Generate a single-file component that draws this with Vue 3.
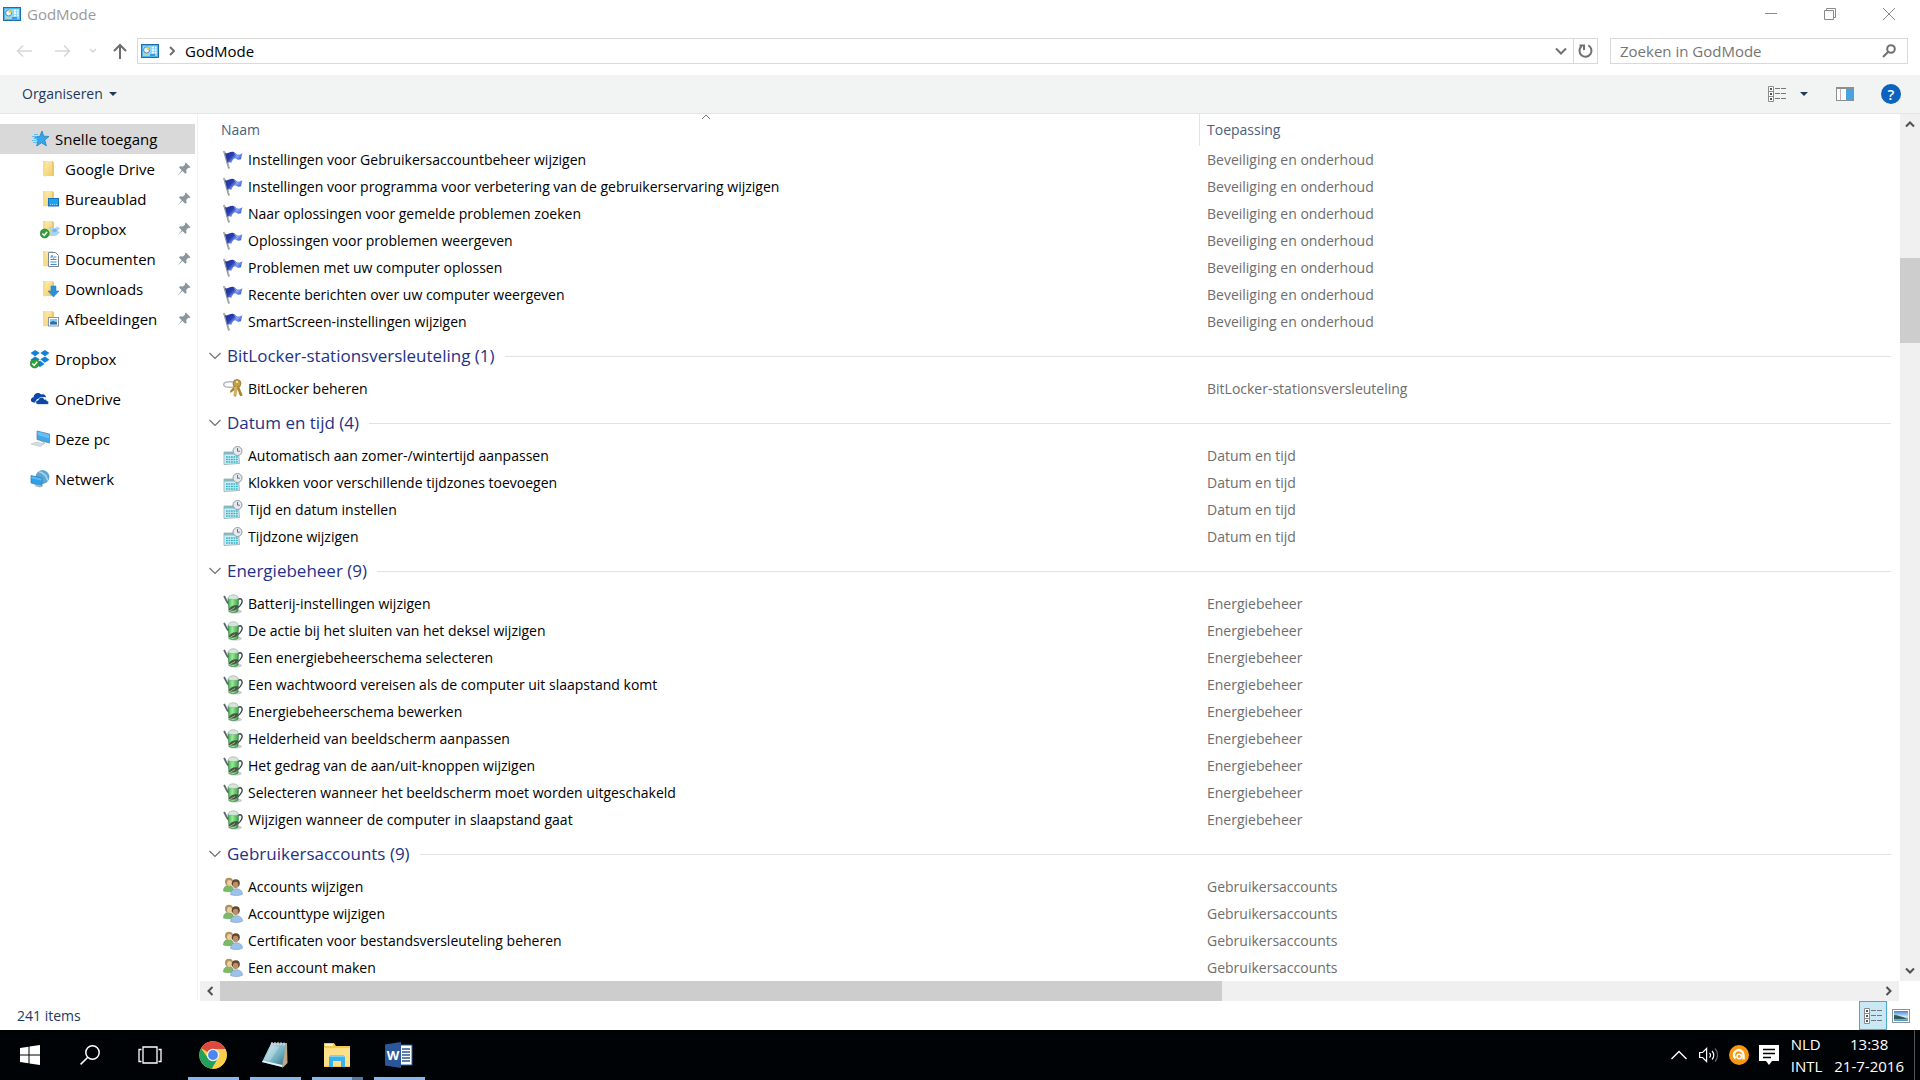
<template>
  <div class="desktop">
    <svg class="sprite" width="0" height="0" aria-hidden="true">
      <defs>
        <linearGradient id="g-folder" x1="0" y1="0" x2="1" y2="1">
          <stop offset="0" stop-color="#fff0b8" />
          <stop offset="1" stop-color="#efc95f" />
        </linearGradient>
        <linearGradient id="g-flag" x1="0" y1="0" x2="1" y2="0.6">
          <stop offset="0" stop-color="#1b2f9c" />
          <stop offset="0.45" stop-color="#2a3fae" />
          <stop offset="0.7" stop-color="#7f9df2" />
          <stop offset="1" stop-color="#2f55d0" />
        </linearGradient>
        <linearGradient id="g-cup" x1="0" y1="0" x2="1" y2="0">
          <stop offset="0" stop-color="#3cae4a" />
          <stop offset="0.4" stop-color="#97ee94" />
          <stop offset="1" stop-color="#3a9c48" />
        </linearGradient>
        <linearGradient id="g-note" x1="0" y1="0" x2="1" y2="1">
          <stop offset="0" stop-color="#d6eef4" />
          <stop offset="0.6" stop-color="#6fb0c2" />
          <stop offset="1" stop-color="#2f6577" />
        </linearGradient>
        <linearGradient id="g-sky" x1="0" y1="0" x2="0" y2="1">
          <stop offset="0" stop-color="#3f86d8" />
          <stop offset="0.55" stop-color="#cfe6f6" />
          <stop offset="1" stop-color="#4a90c0" />
        </linearGradient>
      </defs>

      <symbol id="i-panel" viewBox="0 0 18 14">
        <rect x="0.5" y="0.5" width="17" height="13" fill="#8fd6fb" stroke="#1b6fae" />
        <rect x="1.5" y="1.5" width="15" height="11" fill="none" stroke="#4cb4ee" />
        <circle cx="5.6" cy="6" r="3" fill="#e9f8ff" stroke="#2b78ae" stroke-width="0.8" />
        <path d="M5.6 6V3a3 3 0 0 1 3 3z" fill="#f2d04a" />
        <path d="M11 3.5h2M14 3.5h1.5M11 6h2M14 6h1.5M11 8.5h2M14 8.5h1.5" stroke="#fff" stroke-width="1.4" />
        <path d="M3.5 11h3" stroke="#f2d04a" stroke-width="1.2" />
        <path d="M9 11h5" stroke="#1d7fc0" stroke-width="1.4" />
      </symbol>

      <symbol id="i-star" viewBox="0 0 20 20">
        <path d="M12 2l1.700 5.200 5.300.3-4.300 3.500 1.700 5.800-4.900-3-4.800 3.200 1.300-5.600L4.500 7.700l5.200-.2z" fill="#35a5ea" stroke="#1d83cc" stroke-width="0.800" />
        <path d="M2 7.500h5M3.500 9.500h4M2 11.500h5M3 13.500h4M4 5.500h4" stroke="#5bbaf2" stroke-width="0.900" />
      </symbol>

      <symbol id="i-folder" viewBox="0 0 20 20">
        <path d="M3 2h9l2 1.500V17H3z" fill="url(#g-folder)" />
        <path d="M3 2h2.500v16L3 16.500z" fill="#f6dc8c" />
        <path d="M12 2l2 1.500v13.500h-2z" fill="#ecca6b" />
      </symbol>

      <symbol id="i-desktop" viewBox="0 0 20 20">
        <use href="#i-folder" width="20" height="20" />
        <rect x="8.500" y="9.500" width="10" height="7.500" fill="#1ea0f5" stroke="#1272b8" />
        <path d="M10 15.500h7" stroke="#bfe4ff" stroke-width="0.800" stroke-dasharray="1 1" />
      </symbol>

      <symbol id="i-check" viewBox="0 0 20 20">
        <circle cx="4.700" cy="14.500" r="4.500" fill="#2f9e3b" stroke="#1e7a2c" stroke-width="0.600" />
        <path d="M2.400 14.500l1.800 1.900 3-3.600" fill="none" stroke="#fff" stroke-width="1.400" />
      </symbol>

      <symbol id="i-dropfolder" viewBox="0 0 20 20">
        <use href="#i-folder" width="20" height="20" />
        <path d="M8.500 9.500l3-2 3 2 3-2 2.500 2-2.500 2 2.500 2-3 2.500-2.500 1-3-1-3-2.500 3-2z" fill="#a9d3f2" />
        <path d="M11.500 11.500l3-2 3 2-3 2z" fill="#7ab4e2" />
        <use href="#i-check" width="20" height="20" />
      </symbol>

      <symbol id="i-documents" viewBox="0 0 20 20">
        <use href="#i-folder" width="20" height="20" />
        <path d="M8.500 3.500h7l3 3v11h-10z" fill="#fff" stroke="#7b8790" />
        <path d="M10.500 8h2M14 8h2.500M10.500 10.500h6M10.500 13h6M10.500 15.500h6" stroke="#3b8fd0" />
        <path d="M12 6l-1 2.500M12.500 6l1 4" stroke="#3b8fd0" stroke-width="0.800" />
      </symbol>

      <symbol id="i-downloads" viewBox="0 0 20 20">
        <use href="#i-folder" width="20" height="20" />
        <path d="M11 7h5v5h3l-5.500 6L8 12h3z" fill="#2b90dc" stroke="#1c74b8" stroke-width="0.500" />
      </symbol>

      <symbol id="i-pictures" viewBox="0 0 20 20">
        <use href="#i-folder" width="20" height="20" />
        <rect x="8.500" y="8.500" width="10" height="8.500" fill="#fff" stroke="#8a949b" />
        <rect x="10" y="10" width="7" height="5.500" fill="#8cc6ee" />
        <path d="M10 13.500l3-1.500 4 1.500v2h-7z" fill="#2b6ea8" />
      </symbol>

      <symbol id="i-dropbox" viewBox="0 0 20 20">
        <path d="M5.200 1L.5 4l4.500 3.300L9.700 4zM14.800 1l-4.500 3L15 7.300 19.500 4zM.5 10.700l4.700 3 4.500-3.400L5 7.500zM15 7.500l-4.700 2.800 4.500 3.400 4.700-3zM10 11.500l-4.500 3.600L10 18l4.500-2.900z" fill="#1081de" />
        <use href="#i-check" width="20" height="20" />
      </symbol>

      <symbol id="i-onedrive" viewBox="0 0 20 20">
        <path d="M4 13.500C0 13.500 0 8.500 3.600 8.200 3.600 4.500 8.500 2.500 11 5.600 14 4.500 16 6.500 16 8.500c-3-1-5 0-6 1.500-2.500-.8-4.500.8-4.500 3.500z" fill="#0d47a8" />
        <path d="M8 15.500c-3 0-3-4.300.2-4.500.6-3.200 5.500-3.600 6.300-.6 1-.5 2.300.1 2.300 1.300 2.800.2 2.400 3.800 0 3.800z" fill="#0d47a8" stroke="#fff" stroke-width="0.700" />
      </symbol>

      <symbol id="i-pc" viewBox="0 0 20 20">
        <path d="M7 2l12.500 3v9L7 10.500z" fill="#3fa9ea" stroke="#5d7688" stroke-width="0.700" />
        <path d="M7.500 2.600l11.500 2.800v4L7.500 6z" fill="#66c0f5" />
        <path d="M1 15l6-2 7 2-4 2.500z" fill="#d8dfe4" stroke="#a9b4bc" stroke-width="0.500" />
        <path d="M11 12l3 1v2" stroke="#9aa6ae" fill="none" />
      </symbol>

      <symbol id="i-network" viewBox="0 0 20 20">
        <circle cx="12.500" cy="8" r="6.500" fill="#5ba8d4" stroke="#3f86b4" stroke-width="0.600" />
        <path d="M9 3c3-.5 4 2 6 3s1 4 3 5" stroke="#a9d6e8" stroke-width="1.500" fill="none" />
        <path d="M1 6.500L12 9v8L1 14z" fill="#2f9fe8" stroke="#2a7db8" stroke-width="0.700" />
        <path d="M1.500 7.200L11.500 9.500v2L1.500 9.500z" fill="#5cb8f2" />
        <path d="M4 17l4-1.500 5 1.800-3 1.200z" fill="#a7b4bc" />
      </symbol>

      <symbol id="i-pin" viewBox="0 0 14 14">
        <path d="M8.800.5L13.500 5.200l-1.200.8-1-.2-2.100 2.200.4 2.800-1.300 1L5.500 9 .8 13.200 4.800 8.300 2 5.500l1-1.300 2.800.4L8 2.700l-.2-1z" fill="#8b959c" />
      </symbol>

      <symbol id="i-flag" viewBox="0 0 20 20">
        <path d="M1 1l5 17.500" stroke="#85888f" stroke-width="1.800" />
        <path d="M1.300 1l5 17.500" stroke="#d4d6dc" stroke-width="0.600" />
        <path d="M2 3c3 1.500 5-2 8.500-1 2.500.8 2.500 2.500 4 2.500 2 .2 3.500-.5 5-1.200-.8 2-1 4-1.500 6-2 .6-3.500.5-5-.5-2.200-1-3.500 1-4.700 4.200-1.500-.8-2.800-1-4 0z" fill="url(#g-flag)" />
        <path d="M11 2.500c2 1 1.500 3.500 4 4" stroke="#9db6fa" fill="none" />
      </symbol>

      <symbol id="i-keys" viewBox="0 0 20 20">
        <ellipse cx="7" cy="5.500" rx="6.300" ry="2.800" fill="none" stroke="#b4b8c2" stroke-width="1.500" />
        <circle cx="14" cy="4.500" r="4" fill="#c2a045" stroke="#8d6f22" stroke-width="0.700" />
        <circle cx="14" cy="3" r="1" fill="#fff6cf" />
        <path d="M13 8l3-.5 3.700 9-2.300.8-1.300-2-.6-2.500z" fill="#a8842e" />
        <path d="M12 7l2.500 1-1.500 9.500-2.300-.5.300-2z" fill="#d3b864" stroke="#a18436" stroke-width="0.400" />
        <path d="M11 7.500l-4 4.500.5 2 4-3z" fill="#a8842e" />
      </symbol>

      <symbol id="i-date" viewBox="0 0 20 20">
        <path d="M1 6h14.500l1 11.500L1 18.500z" fill="#cdeff5" stroke="#8fa8ae" stroke-width="0.800" />
        <path d="M1 6h14.500v2.500H1z" fill="#86b8c2" />
        <path d="M3 11h12M3 13.500h12M3 16h12" stroke="#35b3c9" stroke-width="1.600" stroke-dasharray="1.800 0.700" />
        <circle cx="14.500" cy="5" r="4.500" fill="#e6eaed" stroke="#8e9aa2" />
        <path d="M14.500 2v3.200h2.300" stroke="#56626a" fill="none" stroke-width="0.900" />
      </symbol>

      <symbol id="i-power" viewBox="0 0 20 20">
        <ellipse cx="12" cy="17.500" rx="7" ry="2" fill="#c9cdd0" />
        <path d="M5.500 9.500C3.500 8 3 5 1 2" fill="none" stroke="#5b6670" stroke-width="1.800" />
        <path d="M15 5.500c3.500-2 5 1 3.500 4s-2.500 3.500-3.500 4" fill="none" stroke="#3c464e" stroke-width="1.400" />
        <path d="M5 4.500h10.500L15 17c-2 2-7 2-9 0z" fill="url(#g-cup)" stroke="#2b6d38" stroke-width="0.600" />
        <path d="M5 4.500c.5-5 10-5 10.500 0-2.500 1.500-8 1.500-10.500 0z" fill="#d4e6d8" stroke="#8fa698" stroke-width="0.600" />
        <path d="M5.500 16c1.500-4 5.500-5.500 9.800-4.500.2 4-4.800 6.500-9.800 4.500z" fill="#4b5546" />
        <path d="M5 17.500l7-4" stroke="#b9c5a8" stroke-width="0.800" />
      </symbol>

      <symbol id="i-users" viewBox="0 0 20 20">
        <path d="M.5 14c0-4 2.200-5.500 5-5.500s5 1.500 5 5c-2.500 1.500-7 1.700-10 .5z" fill="#7cba68" stroke="#5c9650" stroke-width="0.500" />
        <circle cx="6" cy="4.800" r="4" fill="#b3935c" />
        <ellipse cx="6.500" cy="6" rx="2.500" ry="3" fill="#eecaa5" />
        <path d="M7.500 17.500c0-4 3-5.800 6-5.800s6 1.800 6 5.500c-3 1.800-9 1.800-12 .3z" fill="#9bc2ea" stroke="#6a93c0" stroke-width="0.500" />
        <circle cx="12.800" cy="6.200" r="4" fill="#60482f" />
        <ellipse cx="12.600" cy="8" rx="2.700" ry="3.300" fill="#bd8f68" />
      </symbol>

      <symbol id="i-details" viewBox="0 0 18 16">
        <path d="M.5.5h5v15h-5zM.5 5.500h5M.5 10.500h5" fill="#fff" stroke="#8d8a8a" />
        <path d="M2 2h2v2H2zM2 7h2v2H2zM2 12h2v2H2z" fill="#555" />
        <path d="M7 2.500h5M13 2.500h5M7 7.500h5M13 7.500h5M7 12.500h5M13 12.500h5" stroke="#777" />
      </symbol>
    </svg>

    <div class="window">
      <header class="titlebar">
        <svg class="panel-icon"><use href="#i-panel" /></svg>
        <span class="title">GodMode</span>
        <button class="win-btn" aria-label="Minimaliseren">
          <svg width="12" height="12"><path d="M0 5.500h12" /></svg>
        </button>
        <button class="win-btn" aria-label="Verkleinen">
          <svg width="12" height="12"><path d="M.5 2.500h9v9h-9zM2.500 2.500v-2h9v9h-2" /></svg>
        </button>
        <button class="win-btn" aria-label="Sluiten">
          <svg width="12" height="12"><path d="M0 0l12 12M12 0L0 12" /></svg>
        </button>
      </header>

      <nav class="navbar">
        <button class="nav-btn off" aria-label="Vorige">
          <svg width="16" height="14"><path d="M16 7H1.500M7 1.500L1.500 7 7 12.500" /></svg>
        </button>
        <button class="nav-btn off" aria-label="Volgende">
          <svg width="16" height="14"><path d="M0 7h14.500M9 1.500L14.500 7 9 12.500" /></svg>
        </button>
        <button class="nav-btn small off" aria-label="Recente locaties">
          <svg width="8" height="6"><path d="M1 1l3 3 3-3" /></svg>
        </button>
        <button class="nav-btn up" aria-label="Omhoog">
          <svg width="14" height="16"><path d="M7 16V2M1 8l6-6 6 6" /></svg>
        </button>
        <div class="address">
          <svg class="panel-icon"><use href="#i-panel" /></svg>
          <svg class="crumb" width="6" height="10"><path d="M1 1l4 4-4 4" /></svg>
          <a class="path" href="#">GodMode</a>
          <button class="drop" aria-label="Vorige locaties">
            <svg width="12" height="8"><path d="M1 1.500l5 5 5-5" /></svg>
          </button>
          <button class="refresh" aria-label="Vernieuwen">
            <svg width="16" height="16"><path d="M3.500 3.200a6 6 0 1 0 6.800-.8M1.500 2.500h4.500v4.500" /></svg>
          </button>
        </div>
        <div class="search">
          <input type="text" placeholder="Zoeken in GodMode" aria-label="Zoeken in GodMode" />
          <svg width="14" height="14"><circle cx="9" cy="5" r="3.800" /><path d="M6.200 7.800L1 13" /></svg>
        </div>
      </nav>

      <div class="commandbar">
        <button class="organize">Organiseren <i class="caret"></i></button>
        <button class="cmd views" aria-label="Weergave wijzigen">
          <svg width="18" height="16"><use href="#i-details" /></svg>
          <i class="caret"></i>
        </button>
        <button class="cmd pane" aria-label="Voorbeeldvenster">
          <svg width="18" height="14">
            <rect x="0.500" y="0.500" width="17" height="13" fill="#fff" stroke="#8a8f96" />
            <path d="M0 1.500h18" stroke="#8a8f96" />
            <path d="M4.500 2v11" stroke="#c9b0b0" />
            <rect x="10" y="2" width="7" height="11" fill="#4aa3e0" />
          </svg>
        </button>
        <button class="help" aria-label="Help">?</button>
      </div>

      <div class="body">
        <aside class="sidebar">
          <template v-for="section in places" :key="section.label">
            <a href="#" class="place" :class="{ selected: section.selected }">
              <svg><use :href="'#i-' + section.icon" /></svg>
              <span>{{ section.label }}</span>
            </a>
            <a v-for="child in section.children" :key="child.label" href="#" class="place child">
              <svg><use :href="'#i-' + child.icon" /></svg>
              <span>{{ child.label }}</span>
              <svg class="pin"><use href="#i-pin" /></svg>
            </a>
            <div class="spacer"></div>
          </template>
        </aside>

        <main class="content">
          <div class="list-area">
            <div class="list">
              <svg class="sort" width="10" height="6"><path d="M1 5l4-4 4 4" /></svg>
              <table>
                <colgroup>
                  <col class="col-name" />
                  <col />
                </colgroup>
                <thead>
                  <tr>
                    <th scope="col">Naam</th>
                    <th scope="col">Toepassing</th>
                  </tr>
                </thead>
                <tbody v-for="group in groups" :key="group.name">
                  <tr v-if="group.count" class="group">
                    <th colspan="2" scope="rowgroup">
                      <div class="group-head">
                        <svg width="12" height="8"><path d="M.5 1l5.500 5.500L11.500 1" /></svg>
                        <span>{{ group.name }} ({{ group.count }})</span>
                      </div>
                    </th>
                  </tr>
                  <tr v-for="item in group.items" :key="item">
                    <td>
                      <div class="name">
                        <svg><use :href="'#i-' + group.icon" /></svg>
                        <span>{{ item }}</span>
                      </div>
                    </td>
                    <td class="app">{{ group.name }}</td>
                  </tr>
                </tbody>
              </table>
            </div>
            <div class="vscroll">
              <button aria-label="Omhoog schuiven">
                <svg width="10" height="8"><path d="M1 6.500l4-4 4 4" /></svg>
              </button>
              <div class="track">
                <div class="thumb" :style="{ top: vThumb.start + '%', height: vThumb.size + '%' }"></div>
              </div>
              <button aria-label="Omlaag schuiven">
                <svg width="10" height="8"><path d="M1 1.500l4 4 4-4" /></svg>
              </button>
            </div>
          </div>
          <div class="hscroll">
            <button aria-label="Naar links schuiven">
              <svg width="8" height="10"><path d="M6.500 1l-4 4 4 4" /></svg>
            </button>
            <div class="track">
              <div class="thumb" :style="{ width: hThumb + '%' }"></div>
            </div>
            <button aria-label="Naar rechts schuiven">
              <svg width="8" height="10"><path d="M1.500 1l4 4-4 4" /></svg>
            </button>
          </div>
        </main>
      </div>

      <footer class="statusbar">
        <span>241 items</span>
        <button class="mode active" aria-label="Details">
          <svg width="18" height="16"><use href="#i-details" /></svg>
        </button>
        <button class="mode" aria-label="Grote miniaturen">
          <svg width="18" height="14">
            <rect x="0.500" y="0.500" width="17" height="13" fill="#fff" stroke="#8a949b" />
            <rect x="2" y="2" width="14" height="10" fill="url(#g-sky)" />
            <path d="M2 6c4 0 8 2 14 4H2z" fill="#2f5a52" />
          </svg>
        </button>
      </footer>
    </div>

    <div class="taskbar">
      <button class="task" aria-label="Start">
        <svg width="20" height="20" fill="#fff">
          <path d="M0 3l8.500-1.200V9.500H0zM9.500 1.600L20 0v9.500H9.500zM0 10.500h8.500v7.800L0 17zM9.500 10.500H20V20L9.500 18.400z" />
        </svg>
      </button>
      <button class="task" aria-label="Zoeken">
        <svg width="20" height="20" fill="none" stroke="#fff" stroke-width="1.500">
          <circle cx="12.500" cy="7.500" r="6.700" /><path d="M7.800 12.200L.6 19.400" />
        </svg>
      </button>
      <button class="task" aria-label="Taakweergave">
        <svg width="24" height="20" fill="none" stroke="#fff" stroke-width="1.300">
          <path d="M5 2h14v16H5zM3.500 4.500H1v12h2.500M20.500 4.500H23v12h-2.500" />
        </svg>
      </button>

      <div class="apps">
        <button class="task app-btn" aria-label="Google Chrome">
          <svg width="28" height="28" viewBox="0 0 28 28">
            <circle cx="14" cy="14" r="13.700" fill="#fbd04b" />
            <path d="M14 14L2.100 7.200A13.700 13.700 0 0 1 25.900 7.200L26.300 8H14z" fill="#dc4a3d" />
            <path d="M2.100 7.200A13.700 13.700 0 0 0 13 27.700L19.200 17 14 14 8.800 17z" fill="#23a05a" />
            <path d="M13 27.700L19.300 17A6 6 0 0 0 19.200 10.800L18 8h8.400A13.700 13.700 0 0 1 13 27.700z" fill="#fbd04b" />
            <circle cx="14" cy="14" r="6.200" fill="#f4f4f4" />
            <circle cx="14" cy="14" r="4.900" fill="#4a86ee" />
          </svg>
        </button>
        <button class="task app-btn" aria-label="Kladblok">
          <svg width="28" height="28" viewBox="0 0 28 28">
            <path d="M10 2h16l.5 20-5 5z" fill="#bfa887" />
            <path d="M10 2.500l15 .5-4 23L1 21z" fill="url(#g-note)" />
            <path d="M1 21l20 5 .3-2L2 19.500z" fill="#e6f2f4" />
            <path d="M11 1v3M14 1v3M17 1v3M20 1.200v3M23 1.500v3" stroke="#dfe5e7" stroke-width="1.200" />
            <path d="M10.500 5l8 .5L9 20l-6-1z" fill="#fff" opacity="0.250" />
          </svg>
        </button>
        <button class="task app-btn grouped" aria-label="Verkenner">
          <svg width="28" height="28" viewBox="0 0 28 28">
            <path d="M1 2h10l2 3h14v21H1z" fill="#f3c84f" />
            <path d="M2 3h8v2H2z" fill="#fff3bf" />
            <path d="M1 7h26v18H1z" fill="#fde088" />
            <path d="M6 26V16l2-2h12l2 2v10h-4v-6h-8v6z" fill="#3ab3ec" />
            <path d="M6 16l2-2h12l2 2z" fill="#7fd0f5" />
          </svg>
        </button>
        <button class="task app-btn" aria-label="Word">
          <svg width="28" height="28" viewBox="0 0 28 28">
            <rect x="14" y="4" width="13" height="20" fill="#fff" stroke="#2b579a" />
            <path d="M17 8h8M17 11h8M17 14h8M17 17h8M17 20h8" stroke="#2b579a" stroke-width="1.500" />
            <path d="M0 3.500L16 1v26L0 24.500z" fill="#2b579a" />
            <text x="8" y="19" text-anchor="middle" class="word-letter">W</text>
          </svg>
        </button>
      </div>

      <div class="tray">
        <button aria-label="Verborgen pictogrammen">
          <svg width="16" height="10" fill="none" stroke="#fff" stroke-width="1.400"><path d="M.5 9L8 1.500 15.500 9" /></svg>
        </button>
        <button aria-label="Volume">
          <svg width="20" height="16" fill="none" stroke="#fff" stroke-width="1.200">
            <path d="M.6 5.500h3l4-4v13l-4-4h-3z" />
            <path d="M10.500 6a3 3 0 0 1 0 4.500M13 4a6 6 0 0 1 0 8.500" />
            <path d="M16 1.500a9.500 9.500 0 0 1 0 13" stroke="#666" />
          </svg>
        </button>
        <button aria-label="Avast">
          <svg width="20" height="20">
            <circle cx="10" cy="10" r="10" fill="#f7980f" />
            <path d="M6.500 13.500a4.800 4.800 0 1 1 8-3.500v4.500" fill="none" stroke="#fff" stroke-width="2.400" />
            <circle cx="10.200" cy="11.500" r="2.200" fill="none" stroke="#fff" stroke-width="1.600" />
          </svg>
        </button>
        <button aria-label="Actiecentrum">
          <svg width="20" height="20">
            <path d="M0 0h20v16h-7l-3 4-3-4H0z" fill="#fff" />
            <path d="M4 4.500h12M4 8.500h12M4 12.500h8" stroke="#000" stroke-width="1.300" />
          </svg>
        </button>
        <div class="lang"><span>NLD</span><span>INTL</span></div>
        <div class="clock"><time>13:38</time><time>21-7-2016</time></div>
        <div class="peek"></div>
      </div>
    </div>
  </div>
</template>

<script setup>
import { ref } from "vue";

const vThumb = ref({ start: 15, size: 10.3 });
const hThumb = ref(60.4);

const places = [
  {
    label: "Snelle toegang",
    icon: "star",
    selected: true,
    children: [
      { label: "Google Drive", icon: "folder" },
      { label: "Bureaublad", icon: "desktop" },
      { label: "Dropbox", icon: "dropfolder" },
      { label: "Documenten", icon: "documents" },
      { label: "Downloads", icon: "downloads" },
      { label: "Afbeeldingen", icon: "pictures" },
    ],
  },
  { label: "Dropbox", icon: "dropbox" },
  { label: "OneDrive", icon: "onedrive" },
  { label: "Deze pc", icon: "pc" },
  { label: "Netwerk", icon: "network" },
];

// the first group is scrolled past its heading, so it has no count
const groups = [
  {
    name: "Beveiliging en onderhoud",
    icon: "flag",
    items: [
      "Instellingen voor Gebruikersaccountbeheer wijzigen",
      "Instellingen voor programma voor verbetering van de gebruikerservaring wijzigen",
      "Naar oplossingen voor gemelde problemen zoeken",
      "Oplossingen voor problemen weergeven",
      "Problemen met uw computer oplossen",
      "Recente berichten over uw computer weergeven",
      "SmartScreen-instellingen wijzigen",
    ],
  },
  {
    name: "BitLocker-stationsversleuteling",
    count: 1,
    icon: "keys",
    items: ["BitLocker beheren"],
  },
  {
    name: "Datum en tijd",
    count: 4,
    icon: "date",
    items: [
      "Automatisch aan zomer-/wintertijd aanpassen",
      "Klokken voor verschillende tijdzones toevoegen",
      "Tijd en datum instellen",
      "Tijdzone wijzigen",
    ],
  },
  {
    name: "Energiebeheer",
    count: 9,
    icon: "power",
    items: [
      "Batterij-instellingen wijzigen",
      "De actie bij het sluiten van het deksel wijzigen",
      "Een energiebeheerschema selecteren",
      "Een wachtwoord vereisen als de computer uit slaapstand komt",
      "Energiebeheerschema bewerken",
      "Helderheid van beeldscherm aanpassen",
      "Het gedrag van de aan/uit-knoppen wijzigen",
      "Selecteren wanneer het beeldscherm moet worden uitgeschakeld",
      "Wijzigen wanneer de computer in slaapstand gaat",
    ],
  },
  {
    name: "Gebruikersaccounts",
    count: 9,
    icon: "users",
    items: [
      "Accounts wijzigen",
      "Accounttype wijzigen",
      "Certificaten voor bestandsversleuteling beheren",
      "Een account maken",
    ],
  },
];
</script>

<style>
body {
  margin: 0;
  overflow: hidden;
}
</style>

<style scoped>
.desktop {
  display: flex;
  flex-direction: column;
  height: 100vh;
  background: #fff;
  color: #000;
  font-family: "Open Sans", "Noto Sans", sans-serif;
  font-size: 15px;
  line-height: 20px;
}

.desktop * {
  box-sizing: border-box;
}

.sprite {
  position: absolute;
}

svg {
  display: block;
  flex: none;
}

button {
  display: flex;
  align-items: center;
  justify-content: center;
  padding: 0;
  border: 0;
  background: none;
  font: inherit;
  color: inherit;
}

a {
  color: inherit;
  text-decoration: none;
}

.window {
  display: flex;
  flex-direction: column;
  flex: 1;
  min-height: 0;
}

.panel-icon {
  width: 18px;
  height: 14px;
}

/* title bar */
.titlebar {
  display: flex;
  align-items: center;
  height: 28px;
  padding: 0 2px 0 3px;
}

.title {
  flex: 1;
  margin-left: 6px;
  color: #999;
}

.win-btn {
  width: 59px;
  height: 28px;
}

.win-btn path {
  fill: none;
  stroke: #8a8a8a;
}

/* navigation */
.navbar {
  display: flex;
  align-items: center;
  height: 47px;
  padding: 0 12px 2px 4px;
}

.nav-btn {
  width: 39px;
  height: 26px;
}

.nav-btn.small {
  width: 21px;
}

.nav-btn.up {
  width: 34px;
}

.nav-btn path {
  fill: none;
  stroke: #6d6d6d;
  stroke-width: 2;
}

.nav-btn.off path {
  stroke: #d6d6d6;
  stroke-width: 1.5;
}

.address {
  display: flex;
  align-items: center;
  flex: 1;
  height: 26px;
  padding-left: 3px;
  border: 1px solid #d9d9d9;
}

.crumb {
  margin: 0 10px;
}

.crumb path,
.drop path,
.refresh path,
.search circle,
.search path {
  fill: none;
  stroke: #707070;
  stroke-width: 2;
}

.path {
  flex: 1;
}

.drop,
.refresh {
  width: 24px;
  height: 24px;
}

.refresh {
  border-left: 1px solid #d9d9d9;
}

.search {
  display: flex;
  align-items: center;
  width: 298px;
  height: 26px;
  margin-left: 12px;
  padding: 0 11px 0 9px;
  border: 1px solid #d9d9d9;
}

.search input {
  flex: 1;
  min-width: 0;
  padding: 0;
  border: 0;
  outline: 0;
  font: inherit;
}

.search input::placeholder {
  color: #757575;
}

/* command bar */
.commandbar {
  display: flex;
  align-items: center;
  height: 39px;
  padding: 0 19px 0 22px;
  border-bottom: 1px solid #e4e6e6;
  background: #f2f4f4;
  color: #1e395b;
}

.organize {
  gap: 6px;
  margin-right: auto;
  font-size: 14px;
}

.caret {
  border: 4px solid transparent;
  border-top-color: #1e395b;
  border-bottom: 0;
}

.views {
  gap: 14px;
}

.pane {
  margin: 0 27px 0 28px;
}

.help {
  width: 20px;
  height: 20px;
  border-radius: 50%;
  background: #0a63bd;
  color: #fff;
  font-weight: 600;
}

/* body */
.body {
  display: flex;
  flex: 1;
  min-height: 0;
}

.sidebar {
  width: 198px;
  padding: 10px 2px 0 0;
  border-right: 1px solid #f2f2f2;
}

.place {
  display: flex;
  align-items: center;
  gap: 5px;
  height: 30px;
  padding: 0 4px 0 30px;
}

.place svg {
  width: 20px;
  height: 20px;
}

.place.child {
  padding-left: 40px;
}

.place.selected {
  background: #d9d9d9;
}

.place .pin {
  width: 14px;
  height: 14px;
  margin-left: auto;
}

.spacer {
  height: 10px;
}

.content {
  display: flex;
  flex-direction: column;
  flex: 1;
  min-width: 0;
  padding-left: 2px;
}

.list-area {
  display: flex;
  flex: 1;
  min-height: 0;
}

.list {
  position: relative;
  flex: 1;
  min-width: 0;
  overflow: hidden;
}

.sort {
  position: absolute;
  top: 0;
  left: 501px;
}

.sort path {
  fill: none;
  stroke: #777;
}

table {
  width: 100%;
  table-layout: fixed;
  border-collapse: collapse;
  font-size: 14px;
}

.col-name {
  width: 999px;
}

th,
td {
  height: 27px;
  padding: 0 0 0 8px;
  text-align: left;
  white-space: nowrap;
  font-weight: normal;
}

thead th {
  height: 32px;
  color: #4c607a;
}

thead th:first-child {
  padding-left: 21px;
}

thead th + th {
  background: linear-gradient(#e3e3e3, #e3e3e3) no-repeat 0 0 / 1px 32px;
}

td:first-child {
  padding-left: 23px;
}

.name {
  display: flex;
  align-items: center;
  gap: 5px;
}

.name svg {
  width: 20px;
  height: 20px;
}

.app {
  color: #6d6d6d;
}

.group th {
  height: 40px;
  padding: 2px 9px 0;
}

.group-head {
  display: flex;
  align-items: center;
  gap: 6px;
  color: #1e3287;
  font-size: 17px;
  line-height: 24px;
}

.group-head path {
  fill: none;
  stroke: #707070;
  stroke-width: 1.2;
}

.group-head::after {
  content: "";
  flex: 1;
  height: 1px;
  margin-left: 4px;
  background: #e2e2e2;
}

/* scroll bars */
.vscroll,
.hscroll {
  display: flex;
  background: #f0f0f0;
}

.vscroll {
  flex-direction: column;
  width: 20px;
}

.hscroll {
  height: 20px;
  margin-right: 21px;
}

.vscroll button,
.hscroll button {
  width: 20px;
  height: 20px;
}

.vscroll path,
.hscroll path {
  fill: none;
  stroke: #505050;
  stroke-width: 2;
}

.track {
  position: relative;
  flex: 1;
}

.thumb {
  background: #cdcdcd;
}

.vscroll .thumb {
  position: absolute;
  left: 0;
  right: 0;
}

.hscroll .thumb {
  height: 100%;
}

/* status bar */
.statusbar {
  display: flex;
  align-items: center;
  height: 29px;
  padding: 0 5px 0 17px;
  color: #1e395b;
  font-size: 14px;
}

.statusbar span {
  flex: 1;
}

.mode {
  width: 28px;
  height: 29px;
}

.mode.active {
  border: 1px solid #4aa9cc;
  background: #c9e8f5;
}

/* taskbar */
.taskbar {
  display: flex;
  height: 50px;
  background: #000305;
  color: #fff;
}

.task {
  width: 60px;
  height: 50px;
}

.apps {
  display: flex;
  margin-left: 2px;
}

.app-btn {
  width: 62px;
  background: linear-gradient(#86b9ea, #86b9ea) no-repeat center bottom / 51px 3px;
}

.app-btn.grouped {
  background: linear-gradient(90deg, #86b9ea 40px, #5478a0 40px) no-repeat center bottom / 51px 3px;
}

.word-letter {
  fill: #fff;
  font-size: 13px;
  font-weight: bold;
}

.tray {
  display: flex;
  align-items: center;
  gap: 10px;
  margin-left: auto;
}

.tray button:first-child {
  margin-right: 2px;
}

.lang,
.clock {
  display: flex;
  flex-direction: column;
  line-height: 22px;
}

.lang {
  margin-left: 2px;
}

.clock {
  align-items: center;
  margin-left: 2px;
}

.peek {
  width: 6px;
  height: 50px;
  border-left: 1px solid #555;
}
</style>
